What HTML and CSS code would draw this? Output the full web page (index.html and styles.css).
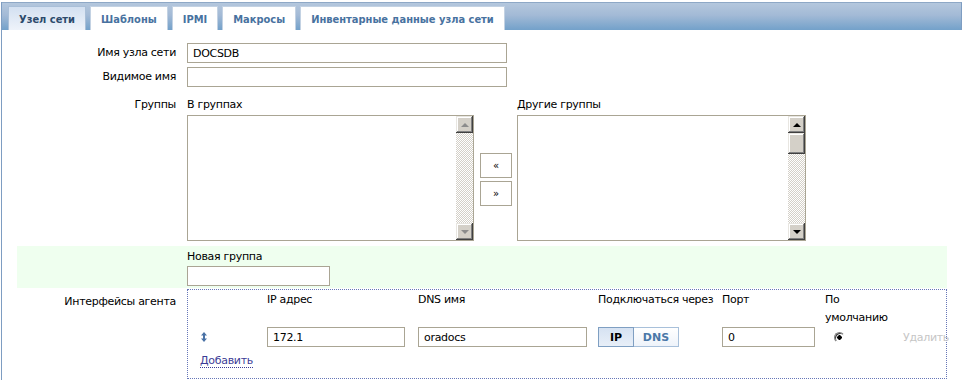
FILE: index.html
```html
<!DOCTYPE html>
<html lang="ru">
<head>
    <meta charset="UTF-8">
    <title>Узел сети</title>
    <link rel="stylesheet" href="styles.css">
</head>
<body>
    <div class="page">
        <ul class="tabs">
            <li class="tab active">Узел сети</li>
            <li class="tab">Шаблоны</li>
            <li class="tab">IPMI</li>
            <li class="tab">Макросы</li>
            <li class="tab">Инвентарные данные узла сети</li>
        </ul>

        <div class="form-list">
            <div class="form-row">
                <div class="form-label">Имя узла сети</div>
                <div class="form-field"><input type="text" class="input input-wide" value="DOCSDB"></div>
            </div>

            <div class="form-row">
                <div class="form-label">Видимое имя</div>
                <div class="form-field"><input type="text" class="input input-wide" value=""></div>
            </div>

            <div class="form-row groups-row">
                <div class="form-label">Группы</div>
                <div class="form-field groups">
                    <div class="group-col">
                        <div class="caption">В группах</div>
                        <div class="listbox listbox-left">
                            <div class="scrollbar disabled">
                                <span class="sb-btn"><i class="arrow up"></i></span>
                                <span class="sb-track"></span>
                                <span class="sb-btn"><i class="arrow down"></i></span>
                            </div>
                        </div>
                    </div>
                    <div class="move-buttons">
                        <button type="button" class="move-btn">&laquo;</button>
                        <button type="button" class="move-btn">&raquo;</button>
                    </div>
                    <div class="group-col">
                        <div class="caption">Другие группы</div>
                        <div class="listbox listbox-right">
                            <div class="scrollbar">
                                <span class="sb-btn"><i class="arrow up"></i></span>
                                <span class="sb-btn sb-thumb"></span>
                                <span class="sb-track"></span>
                                <span class="sb-btn"><i class="arrow down"></i></span>
                            </div>
                        </div>
                    </div>
                </div>
            </div>

            <div class="form-row new-group">
                <div class="form-label"></div>
                <div class="form-field">
                    <div class="caption">Новая группа</div>
                    <input type="text" class="input input-group" value="">
                </div>
            </div>

            <div class="form-row interfaces-row">
                <div class="form-label">Интерфейсы агента</div>
                <div class="form-field">
                    <div class="interfaces">
                        <div class="iface-head">
                            <span></span>
                            <span>IP адрес</span>
                            <span>DNS имя</span>
                            <span>Подключаться через</span>
                            <span>Порт</span>
                            <span>По умолчанию</span>
                            <span></span>
                        </div>
                        <div class="iface-row">
                            <span class="drag">
                                <svg width="6" height="10" viewBox="0 0 6 10">
                                    <path d="M3 0 L6 3.5 L0 3.5 Z M2 3.5 H4 V6.5 H2 Z M0 6.5 L6 6.5 L3 10 Z" fill="#4a72a6"/>
                                </svg>
                            </span>
                            <span><input type="text" class="input input-ip" value="172.1"></span>
                            <span><input type="text" class="input input-dns" value="oradocs"></span>
                            <span class="toggle">
                                <button type="button" class="toggle-btn on">IP</button><button type="button" class="toggle-btn">DNS</button>
                            </span>
                            <span><input type="text" class="input input-port" value="0"></span>
                            <span><i class="radio"></i></span>
                            <span class="remove">Удалить</span>
                        </div>
                        <div class="iface-add"><a class="link">Добавить</a></div>
                    </div>
                </div>
            </div>
        </div>
    </div>
</body>
</html>
```

FILE: styles.css
```css
* {
    margin: 0;
    padding: 0;
    box-sizing: border-box;
}

body {
    background: #fff;
    font-family: "DejaVu Sans", Verdana, sans-serif;
    font-size: 11px;
    line-height: 13px;
    letter-spacing: -0.3px;
    color: #000;
    overflow: hidden;
}

.page {
    margin: 2px 0 0 1px;
    border-left: 1px solid #7e9dc2;
    height: 378px;
}

/* вкладки */
.tabs {
    list-style: none;
    display: flex;
    gap: 4px;
    height: 28px;
    width: 960px;
    padding: 3px 0 0 6px;
    border-top: 1px solid #8ea8c6;
    border-right: 1px solid #7e9dc2;
    background: linear-gradient(#b4c7dd, #a3bad6 45%, #73a1ca);
}

.tab {
    height: 24px;
    padding: 6px 10px 0;
    background: #fff;
    border: 1px solid #c3d2e3;
    border-bottom: none;
    font-family: "DejaVu Sans Condensed", "DejaVu Sans", sans-serif;
    font-weight: bold;
    letter-spacing: 0;
    color: #4872a0;
}

.tab.active {
    background: linear-gradient(#d3e0f1, #eef3fa);
    border-color: #a9bfd8;
    color: #2c4a6c;
}

/* форма */
.form-list {
    margin: 11px 0 0 15px;
    width: 930px;
}

.form-row {
    display: grid;
    grid-template-columns: 170px 760px;
    padding: 2px 0;
}

.form-label {
    text-align: right;
    padding-right: 11px;
    line-height: 20px;
}

.input {
    height: 20px;
    border: 1px solid #aaa594;
    padding: 0 5px;
    font-family: inherit;
    font-size: 11px;
    letter-spacing: inherit;
    color: #000;
    background: #fff;
    outline: none;
}

.input-wide { width: 320px; }
.input-group { width: 143px; margin-top: 3px; }
.input-ip { width: 138px; }
.input-dns { width: 169px; }
.input-port { width: 93px; }

.caption {
    line-height: 13px;
}

/* группы */
.groups-row {
    padding: 9px 0 5px;
}

.groups-row .form-label {
    line-height: 13px;
}

.groups {
    display: flex;
}

.groups .caption {
    margin-bottom: 4px;
}

.listbox {
    height: 126px;
    border: 1px solid #aaa594;
    background: #fff;
    display: flex;
    justify-content: flex-end;
}

.listbox-left { width: 287px; }
.listbox-right { width: 289px; }

.scrollbar {
    width: 17px;
    display: flex;
    flex-direction: column;
    background: repeating-conic-gradient(#d4d0c8 0 25%, #fff 0 50%) 0 0 / 2px 2px;
}

.sb-btn {
    height: 17px;
    flex: none;
    display: flex;
    align-items: center;
    justify-content: center;
    background: #d4d0c8;
    box-shadow: inset -1px -1px #404040, inset 1px 1px #e8e6e1, inset -2px -2px #808080, inset 2px 2px #fff;
}

.sb-thumb {
    height: 21px;
}

.sb-track {
    flex: 1;
}

.arrow {
    width: 0;
    height: 0;
    border-left: 4px solid transparent;
    border-right: 4px solid transparent;
}

.arrow.up { border-bottom: 4px solid #000; }
.arrow.down { border-top: 4px solid #000; }

.disabled .arrow.up { border-bottom-color: #8c8c8c; }
.disabled .arrow.down { border-top-color: #8c8c8c; }

.move-buttons {
    display: flex;
    flex-direction: column;
    gap: 3px;
    margin: 0 5px 0 6px;
    padding-top: 55px;
}

.move-btn {
    width: 32px;
    height: 25px;
    border: 1px solid #aaa594;
    background: #fff;
    font-family: inherit;
    font-size: 10px;
    color: #000;
}

/* новая группа */
.new-group {
    background: #efffef;
    padding: 4px 0 2px;
}

/* интерфейсы */
.interfaces-row {
    padding: 1px 0 0;
}

.interfaces-row .form-label {
    padding-top: 3px;
}

.interfaces {
    width: 760px;
    height: 90px;
    border: 1px dotted #6676b8;
    padding: 1px 0 0 12px;
}

.iface-head,
.iface-row {
    display: grid;
    grid-template-columns: 67px 151px 180px 124px 103px 78px 43px;
}

.iface-head {
    line-height: 18px;
}

.iface-row {
    height: 20px;
    align-items: center;
}

.drag {
    display: flex;
    padding-left: 1px;
}

.toggle {
    display: flex;
}

.toggle-btn {
    height: 20px;
    width: 45px;
    border: 1px solid #a8c0da;
    border-left: none;
    background: linear-gradient(#fff, #eef3fa);
    font-family: inherit;
    font-size: 11px;
    font-weight: bold;
    color: #4a78a8;
}

.toggle-btn.on {
    width: 36px;
    border: 1px solid #7f9fc2;
    background: linear-gradient(#d6e2f2, #e8eff8);
    color: #000;
}

.radio {
    display: block;
    width: 11px;
    height: 11px;
    margin-left: 9px;
    border-radius: 50%;
    border: 1px solid;
    border-color: #808080 #fff #fff #808080;
    box-shadow: inset 1px 1px #404040;
    background: radial-gradient(circle, #000 0 2px, #fff 2.5px);
}

.remove {
    color: #c6c6c6;
    white-space: nowrap;
}

.iface-add {
    margin-top: 7px;
}

.link {
    color: #3c3c96;
    border-bottom: 1px dotted #3c3c96;
    cursor: pointer;
}
```
